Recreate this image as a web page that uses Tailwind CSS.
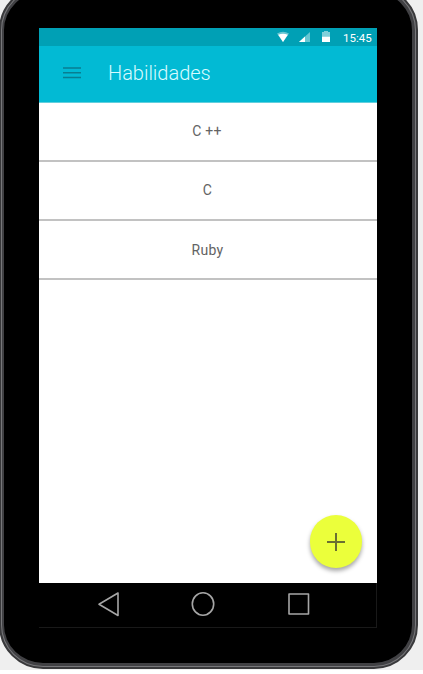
<!DOCTYPE html>
<html lang="es">
<head>
<meta charset="utf-8">
<title>Habilidades</title>
<script src="https://cdn.jsdelivr.net/npm/@tailwindcss/browser@4"></script>
</head>
<body class="w-[423px] h-[674px] overflow-hidden bg-white font-['Roboto',sans-serif]">
<div class="w-[423px] h-[670px] overflow-hidden bg-[#efefef]">
  <div class="-mt-[14px] -ml-px w-[419px] h-[683px] rounded-[44px] border-2 border-[#39393b] bg-[#77777a] p-px">
    <div class="w-full h-full rounded-[41px] border-[3px] border-[#414144] border-l-2 bg-black pt-[36px] pl-[35px]">
      <div class="w-[338px] h-[600px] flex flex-col">
        <header>
          <div class="h-[18px] bg-[#00a0b5] flex items-center justify-end pr-[5px] text-white">
            <svg class="w-3 h-3 mr-[10px]" viewBox="0 0 12 12"><path d="M0 2.5Q6-1 12 2.5L6 11Z" fill="#fff" fill-opacity=".4"/><path d="M1.2 3.7Q6 2 10.8 3.7L6 11Z" fill="#fff"/></svg>
            <svg class="w-3 h-3 mr-[11px]" viewBox="0 0 12 12"><path d="M0 11L11 1V11Z" fill="#fff" fill-opacity=".4"/><path d="M0 11L6 5.5V11Z" fill="#fff"/></svg>
            <svg class="w-2 h-3 mr-[13px]" viewBox="0 0 8 12"><path d="M0 1H2V0H6V1H8V5.5H0Z" fill="#fff" fill-opacity=".5"/><path d="M0 5.5H8V11H0Z" fill="#fff"/></svg>
            <span class="text-[11.5px] leading-none pt-[3px] w-[29px] whitespace-nowrap">15:45</span>
          </div>
          <div class="h-[57px] bg-[#02bad4] border-b border-[#62cfdd] flex items-center pl-6">
            <svg class="w-[18px] h-3 mr-[27px] mt-[-3px]" viewBox="0 0 18 12" stroke="#087e91" stroke-width="1.5"><path d="M0 1H18M0 5.8H18M0 10.5H18"/></svg>
            <h1 class="text-[20px] leading-6 font-light text-[#d9fbff] tracking-[-.02px] pb-[3px]">Habilidades</h1>
          </div>
        </header>
        <main class="relative h-[480px] bg-white text-[14px] text-[#636363] text-center tracking-[.3px]">
          <ul>
            <li class="h-[59px] flex items-center justify-center border-b-2 border-[#c2c2c2] pr-[2px]">C ++</li>
            <li class="h-[59px] flex items-center justify-center border-b-2 border-[#c2c2c2] pr-px">C</li>
            <li class="h-[59px] flex items-center justify-center border-b-2 border-[#c2c2c2] pt-[2px] pr-px">Ruby</li>
          </ul>
          <button class="absolute right-[15px] bottom-[15px] w-[52px] h-[53px] rounded-full bg-[#ebff3b] shadow-[0_3px_4px_rgba(0,0,0,0.35)] flex items-center justify-center" aria-label="Agregar">
            <svg class="w-[18px] h-[18px]" viewBox="0 0 18 18" stroke="#6a6f32" stroke-width="2"><path d="M9 0V18M0 9H18"/></svg>
          </button>
        </main>
        <nav class="h-[45px] bg-black border-r border-b border-[#191919] flex items-start pt-[8px] pl-[59px]">
          <svg class="w-[22px] h-[26px]" viewBox="0 0 22 26" fill="none" stroke="#a6a6a6" stroke-width="1.6" stroke-linejoin="round"><path d="M20 2V24.5L1 13.3Z"/></svg>
          <svg class="w-[24px] h-[26px] ml-[71px]" viewBox="0 0 24 26" fill="none" stroke="#a6a6a6" stroke-width="1.6"><ellipse cx="12" cy="13" rx="10.7" ry="11.2"/></svg>
          <svg class="w-[22px] h-[26px] ml-[73px]" viewBox="0 0 22 26" fill="none" stroke="#a6a6a6" stroke-width="1.6" stroke-linejoin="round"><path d="M1 3H20.5V23H1Z"/></svg>
        </nav>
      </div>
    </div>
  </div>
</div>
</body>
</html>
